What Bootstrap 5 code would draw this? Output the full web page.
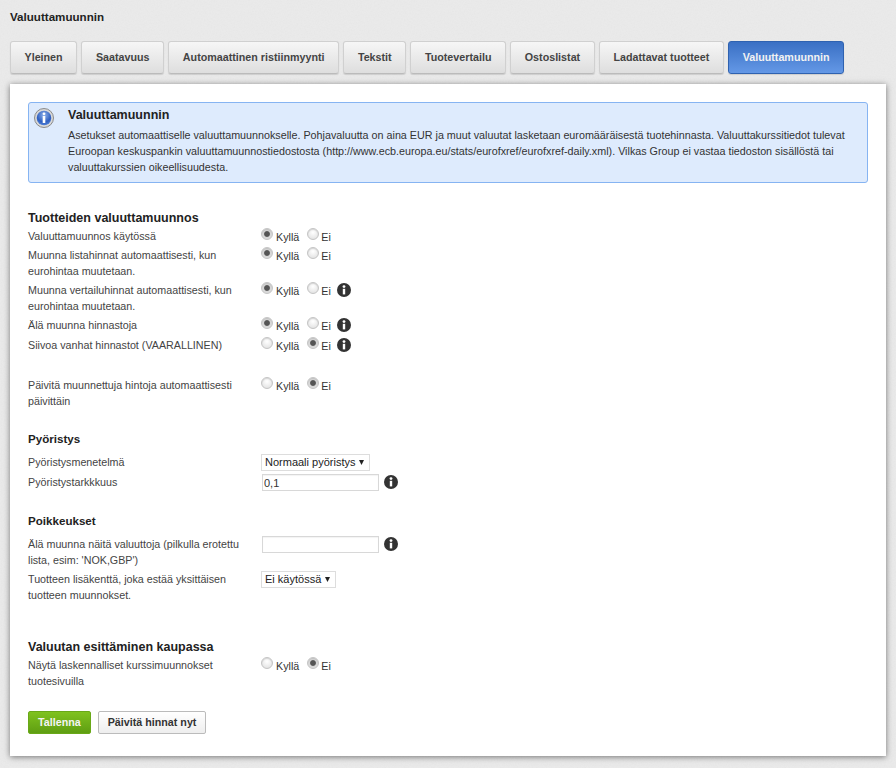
<!DOCTYPE html>
<html lang="fi"><head><meta charset="utf-8"><title>Valuuttamuunnin</title>
<link href="https://cdn.jsdelivr.net/npm/bootstrap@5.3.0/dist/css/bootstrap.min.css" rel="stylesheet">
<style>
body{background:#ebebeb url("data:image/svg+xml,%3Csvg xmlns='http://www.w3.org/2000/svg' width='200' height='200'%3E%3Cfilter id='n'%3E%3CfeTurbulence type='fractalNoise' baseFrequency='.7' numOctaves='2'/%3E%3CfeColorMatrix values='0 0 0 0 .4 0 0 0 0 .4 0 0 0 0 .4 .6 0 0 0 0'/%3E%3C/filter%3E%3Crect width='200' height='200' filter='url(%23n)' opacity='.12'/%3E%3C/svg%3E");font-family:"Liberation Sans",Arial,sans-serif;font-size:10.72px;line-height:16px;color:#444;padding:0 10px;height:768px;overflow:hidden}
.page-ttl{font-size:11.6px;font-weight:700;color:#222;margin:0;padding-top:9px;height:41px;line-height:16px}
.tabbar{gap:4.3px;height:33px;margin-bottom:10px}
.tabbtn{display:block;height:33px;line-height:31px;padding:0 13.5px;font-weight:700;font-size:10.72px;color:#444;text-decoration:none;border:1px solid #d0d0d0;border-bottom-color:#bbb;border-radius:3px;background:linear-gradient(#f6f6f6,#dedede);box-shadow:0 1px 1px rgba(0,0,0,.12);white-space:nowrap}
.tabbtn.on{color:#f2f2f2;background:linear-gradient(#3a70c4,#6498e6);border-color:#2f62b0}
.panel{background:#fff;width:876px;height:672px;padding:18px;box-shadow:0 1px 6px rgba(0,0,0,.5)}
.infobox{background:#deebfd;border:1px solid #86b4f2;border-radius:3px;height:81px;padding:4px 12px 0 5px;gap:14px;margin-bottom:27px;color:#333}
.infobox svg{flex:none;margin-top:1px}
.infottl{font-size:12.5px;font-weight:700;color:#222;margin:0 0 3px;line-height:17px}
.infobox p{margin:0;font-size:10.76px}
.sect{font-size:12.5px;font-weight:700;color:#222;margin:0 0 2px;line-height:16px}
.sect.sm{font-size:11.6px;margin-bottom:7px}
.frow{display:flex;margin-bottom:3px}
.flab{width:233px;flex:none;padding-right:6px}
.fctl{display:flex;align-items:flex-start;height:16px}
.tall{height:17px}
.rad{appearance:none;width:12px;height:12px;border-radius:50%;border:1px solid #c4c4c4;background:radial-gradient(circle at 50% 35%,#fff,#ddd);margin:0 3px 0 0;flex:none;box-shadow:inset 0 1px 1px rgba(0,0,0,.12)}
.rad:checked{background:radial-gradient(circle,#555 0 2.4px,#d6d6d6 3.4px,#e6e6e6)}
.rlab{margin:1px 8px 0 0;color:#333}
.rlab.last{margin:1px 0 0 -1px}
.ii{flex:none;margin:1px 0 0 6px}
.ii.nr{margin-left:5px}
.txtin{width:117px;height:17px;margin-left:1px;border:1px solid #d8d8d8;padding:0 1px;font-size:11px;line-height:15px;color:#333;box-shadow:inset 0 1px 1px rgba(0,0,0,.05)}
.slct{appearance:none;height:17px;border:1px solid #ddd;border-radius:0;padding:0 13px 0 3px;font-size:11px;line-height:15px;color:#222;background:#fff url("data:image/svg+xml,%3Csvg xmlns='http://www.w3.org/2000/svg' width='5' height='5'%3E%3Cpath d='M0 0h5L2.5 5z' fill='%23222'/%3E%3C/svg%3E") no-repeat right 5px center}
.gbtn,.wbtn{height:23px;font-size:10.72px;font-weight:700;line-height:21px;padding:0 9px;border-radius:2px}
.gbtn{color:#f4f4f4;background:linear-gradient(#7fc21f,#5f9e12);border:1px solid #69a818}
.wbtn{color:#333;background:linear-gradient(#fff,#eee);border:1px solid #bbb}
.gbtn:hover{color:#fff}
.actions{margin-top:22px;gap:7px}
.gap-a{height:20px}.gap-b{height:19px}.gap-d{height:19px}.gap-c{height:33px}
</style></head><body>
<h1 class="page-ttl">Valuuttamuunnin</h1>
<nav class="d-flex tabbar">
<a class="tabbtn" href="#">Yleinen</a><a class="tabbtn" href="#">Saatavuus</a><a class="tabbtn" href="#">Automaattinen ristiinmyynti</a><a class="tabbtn" href="#">Tekstit</a><a class="tabbtn" href="#">Tuotevertailu</a><a class="tabbtn" href="#">Ostoslistat</a><a class="tabbtn" href="#">Ladattavat tuotteet</a><a class="tabbtn on" href="#">Valuuttamuunnin</a>
</nav>
<svg width="0" height="0" class="position-absolute"><defs><symbol id="inf" viewBox="0 0 14 14"><circle cx="7" cy="7" r="7" fill="#333"/><circle cx="7" cy="3.6" r="1.4" fill="#fff"/><rect x="5.8" y="5.8" width="2.4" height="5.6" fill="#fff"/></symbol></defs></svg>
<main class="panel">
<div class="infobox d-flex">
<svg width="20" height="20" viewBox="0 0 20 20"><defs><radialGradient id="bl" cx=".5" cy=".3" r=".8"><stop offset="0" stop-color="#8fb2ea"/><stop offset=".6" stop-color="#2f5fc0"/><stop offset="1" stop-color="#5f8fe0"/></radialGradient></defs><circle cx="10" cy="10" r="9.5" fill="#d8d8d8" stroke="#8a8a8a"/><circle cx="10" cy="10" r="7.3" fill="url(#bl)"/><circle cx="10" cy="5.8" r="1.4" fill="#fff"/><rect x="8.7" y="8" width="2.6" height="7" fill="#fff"/></svg>
<div><h2 class="infottl">Valuuttamuunnin</h2><p>Asetukset automaattiselle valuuttamuunnokselle. Pohjavaluutta on aina EUR ja muut valuutat lasketaan euromääräisestä tuotehinnasta. Valuuttakurssitiedot tulevat Euroopan keskuspankin valuuttamuunnostiedostosta (http://www.ecb.europa.eu/stats/eurofxref/eurofxref-daily.xml). Vilkas Group ei vastaa tiedoston sisällöstä tai valuuttakurssien oikeellisuudesta.</p></div>
</div>

<h3 class="sect">Tuotteiden valuuttamuunnos</h3>
<div class="frow"><div class="flab">Valuuttamuunnos käytössä</div><div class="fctl"><input class="rad" type="radio" name="a" checked><span class="rlab">Kyllä</span><input class="rad" type="radio" name="a"><span class="rlab last">Ei</span></div></div>
<div class="frow"><div class="flab">Muunna listahinnat automaattisesti, kun eurohintaa muutetaan.</div><div class="fctl"><input class="rad" type="radio" name="b" checked><span class="rlab">Kyllä</span><input class="rad" type="radio" name="b"><span class="rlab last">Ei</span></div></div>
<div class="frow"><div class="flab">Muunna vertailuhinnat automaattisesti, kun eurohintaa muutetaan.</div><div class="fctl"><input class="rad" type="radio" name="c" checked><span class="rlab">Kyllä</span><input class="rad" type="radio" name="c"><span class="rlab last">Ei</span><svg class="ii" width="14" height="14"><use href="#inf"/></svg></div></div>
<div class="frow tall"><div class="flab">Älä muunna hinnastoja</div><div class="fctl"><input class="rad" type="radio" name="d" checked><span class="rlab">Kyllä</span><input class="rad" type="radio" name="d"><span class="rlab last">Ei</span><svg class="ii" width="14" height="14"><use href="#inf"/></svg></div></div>
<div class="frow tall"><div class="flab">Siivoa vanhat hinnastot (VAARALLINEN)</div><div class="fctl"><input class="rad" type="radio" name="e"><span class="rlab">Kyllä</span><input class="rad" type="radio" name="e" checked><span class="rlab last">Ei</span><svg class="ii" width="14" height="14"><use href="#inf"/></svg></div></div>
<div class="gap-a"></div>
<div class="frow"><div class="flab">Päivitä muunnettuja hintoja automaattisesti päivittäin</div><div class="fctl"><input class="rad" type="radio" name="f"><span class="rlab">Kyllä</span><input class="rad" type="radio" name="f" checked><span class="rlab last">Ei</span></div></div>
<div class="gap-b"></div>
<h3 class="sect sm">Pyöristys</h3>
<div class="frow tall"><div class="flab">Pyöristysmenetelmä</div><div class="fctl"><select class="slct"><option>Normaali pyöristys</option></select></div></div>
<div class="frow tall"><div class="flab">Pyöristystarkkkuus</div><div class="fctl"><input class="txtin" type="text" value="0,1"><svg class="ii nr" width="14" height="14"><use href="#inf"/></svg></div></div>
<div class="gap-d"></div>
<h3 class="sect sm">Poikkeukset</h3>
<div class="frow"><div class="flab">Älä muunna näitä valuuttoja (pilkulla erotettu lista, esim: 'NOK,GBP')</div><div class="fctl"><input class="txtin" type="text"><svg class="ii nr" width="14" height="14"><use href="#inf"/></svg></div></div>
<div class="frow"><div class="flab">Tuotteen lisäkenttä, joka estää yksittäisen tuotteen muunnokset.</div><div class="fctl"><select class="slct"><option>Ei käytössä</option></select></div></div>
<div class="gap-c"></div>
<h3 class="sect">Valuutan esittäminen kaupassa</h3>
<div class="frow"><div class="flab">Näytä laskennalliset kurssimuunnokset tuotesivuilla</div><div class="fctl"><input class="rad" type="radio" name="g"><span class="rlab">Kyllä</span><input class="rad" type="radio" name="g" checked><span class="rlab last">Ei</span></div></div>
<div class="d-flex actions"><button class="btn gbtn" type="button">Tallenna</button><button class="btn wbtn" type="button">Päivitä hinnat nyt</button></div>
</main>
<script src="https://cdn.jsdelivr.net/npm/bootstrap@5.3.0/dist/js/bootstrap.bundle.min.js"></script>
</body></html>
